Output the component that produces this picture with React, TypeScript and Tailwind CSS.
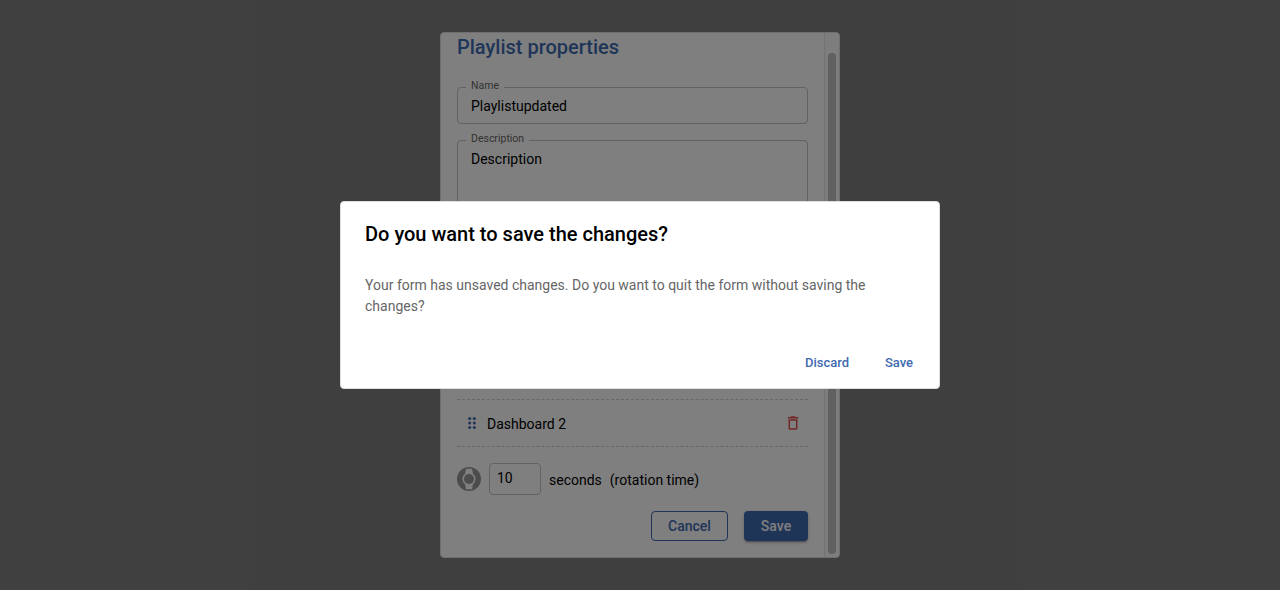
import React from 'react';

function Field({ label, notch, className, children }: { label: string; notch: string; className: string; children: React.ReactNode }) {
  return (
    <fieldset className={`m-0 min-w-0 rounded-[4px] border border-[#c4c4c4] px-2 ${className}`}>
      <legend className={`h-[11px] px-[5px] text-[10.5px] leading-[11px] text-[#666666] ${notch}`}>
        <span className="relative top-[-2px]">{label}</span>
      </legend>
      <div className="px-[5px] text-[14px] leading-[20px] text-black">{children}</div>
    </fieldset>
  );
}

function DragIcon() {
  return (
    <svg className="h-4 w-4" viewBox="0 0 16 16" fill="#3f6ab0">
      <circle cx="5.7" cy="3.5" r="1.5" />
      <circle cx="10.3" cy="3.5" r="1.5" />
      <circle cx="5.7" cy="8" r="1.5" />
      <circle cx="10.3" cy="8" r="1.5" />
      <circle cx="5.7" cy="12.5" r="1.5" />
      <circle cx="10.3" cy="12.5" r="1.5" />
    </svg>
  );
}

function TrashIcon() {
  return (
    <svg className="h-[18px] w-[18px]" viewBox="0 0 24 24" fill="#e0504c">
      <path d="M6 19c0 1.1.9 2 2 2h8c1.100 0 2-.9 2-2V7H6v12zM8 9h8v10H8V9zm7.500-5-1-1h-5l-1 1H5v2h14V4h-3.500z" />
    </svg>
  );
}

function RotationIcon() {
  return (
    <svg className="h-6 w-6" viewBox="0 0 24 24">
      <circle cx="12" cy="12" r="12" fill="#999999" />
      <path d="M9 1.800h6l1 5a6.500 6.500 0 0 1 0 10.400l-1 5H9l-1-5a6.500 6.500 0 0 1 0-10.400z" fill="#ffffff" />
      <circle cx="12" cy="12" r="5" fill="#999999" />
    </svg>
  );
}

function PropertiesForm() {
  return (
    <div className="flex h-[526px] w-[400px] overflow-hidden rounded-[4px] border border-[#dedede] bg-white">
      <div className="flex w-[383px] shrink-0 flex-col px-4">
        <h2 className="mt-[-1px] h-[30px] text-[20px] leading-[30px] font-medium text-[#3f6ab0]">Playlist properties</h2>
        <Field label="Name" notch="w-[38px]" className="mt-5 h-[42px]"><div className="mt-[3px]">Playlistupdated</div></Field>
        <Field label="Description" notch="w-[63px]" className="mt-[11px] h-[106px]"><div className="mt-[3px]">Description</div></Field>
        <div className="mt-[158px] flex h-[48px] items-center border-y border-dashed border-[#cfcfcf] pr-[6px] pl-[7px]">
          <DragIcon />
          <span className="ml-[7px] grow pt-[2px] text-[14px] leading-[20px]">Dashboard 2</span>
          <TrashIcon />
        </div>
        <div className="mt-4 flex h-8 items-center text-[14px]">
          <RotationIcon />
          <div className="ml-2 h-8 w-[52px] rounded-[4px] border border-[#c4c4c4] pl-[7px] leading-[29px]">10</div>
          <span className="ml-2 pt-[2px] leading-5">seconds</span>
          <span className="ml-2 pt-[2px] leading-5">(rotation time)</span>
        </div>
        <div className="mt-4 flex justify-end gap-4">
          <button className="h-[30px] w-[77px] rounded-[4px] border border-[#3f6ab0] text-[14px] font-medium text-[#3f6ab0]">Cancel</button>
          <button className="h-[30px] w-16 rounded-[4px] bg-[#3f6ab0] text-[14px] font-medium text-white shadow-[0_3px_1px_-2px_rgba(0,0,0,0.2),0_2px_2px_0_rgba(0,0,0,0.14),0_1px_5px_0_rgba(0,0,0,0.12)]">Save</button>
        </div>
      </div>
      <div className="flex w-[15px] shrink-0 justify-center border-l border-[#e6e6e6] bg-[#fafafa] pt-5 pb-[3px]">
        <div className="w-2 rounded-full bg-[#c1c1c1]" />
      </div>
    </div>
  );
}

function SaveDialog() {
  return (
    <div className="h-[188px] w-[600px] rounded-[4px] border border-[#dedede] bg-white">
      <h2 className="px-6 pt-4 text-[20px] leading-8 font-medium text-black">Do you want to save the changes?</h2>
      <p className="mt-[25px] px-6 text-[14px] leading-[21px] text-[#666666]">
        Your form has unsaved changes. Do you want to quit the form without saving the changes?
      </p>
      <div className="mt-[31px] flex justify-end gap-2 pr-2 text-[13px] font-medium text-[#3f6ab0]">
        <button className="h-[30px] w-16">Discard</button>
        <button className="h-[30px] w-16">Save</button>
      </div>
    </div>
  );
}

export default function App() {
  return (
    <div className="relative h-[590px] w-[1280px] overflow-hidden bg-white font-['Roboto',sans-serif] text-black">
      <div className="absolute inset-0 flex items-center justify-center bg-black/50">
        <PropertiesForm />
      </div>
      <div className="absolute inset-0 flex items-center justify-center bg-black/50">
        <SaveDialog />
      </div>
    </div>
  );
}
